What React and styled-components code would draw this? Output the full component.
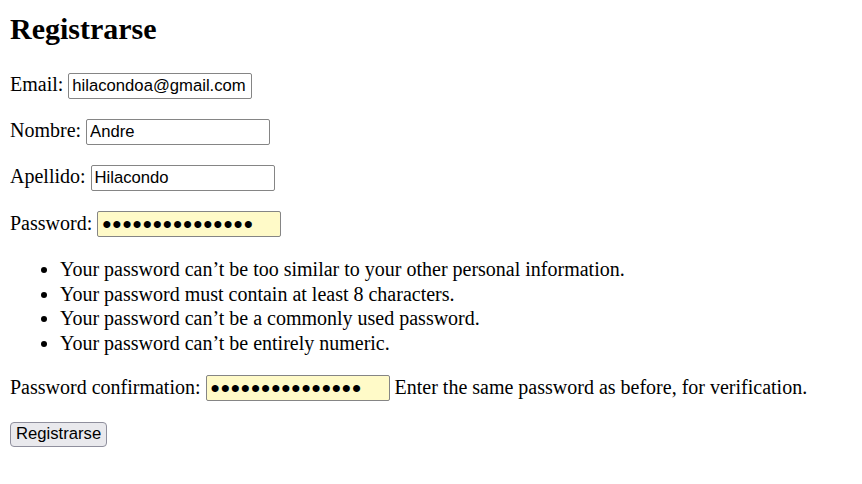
import React from "react";
import styled, { createGlobalStyle } from "styled-components";

const GlobalStyle = createGlobalStyle`
  body {
    margin: 10px;
    font-family: "Liberation Serif", "Times New Roman", serif;
    font-size: 20px;
    color: #000;
    background: #fff;
  }
`;

const Title = styled.h2`
  font-size: 30px;
  font-weight: bold;
  margin: 2px 0 27px;
`;

const Field = styled.p`
  margin: 20px 0;
`;

const TextInput = styled.input`
  box-sizing: border-box;
  width: 184px;
  height: 26px;
  padding: 1px 3px;
  font-family: "Liberation Sans", Arial, sans-serif;
  font-size: 16.67px;
  color: #000;
  background: #fff;
  border: 1px solid #858585;
  border-radius: 2px;
  outline: none;
  vertical-align: baseline;
`;

const SecretInput = styled(TextInput)`
  background: #fffac8;
  font-size: 26px;
  letter-spacing: 1px;
  line-height: 22px;
  padding: 0 4px;
  vertical-align: -3px;
`;

const HelpList = styled.ul`
  margin: 20px 0;
  padding-left: 50px;
  li {
    line-height: 24.5px;
  }
`;

const SubmitButton = styled.button`
  font-family: "Liberation Sans", Arial, sans-serif;
  font-size: 16.67px;
  color: #000;
  height: 25px;
  padding: 1px 5px;
  background: #e9e9ed;
  border: 1px solid #8f8f9d;
  border-radius: 4px;
`;

const passwordRules = [
  "Your password can’t be too similar to your other personal information.",
  "Your password must contain at least 8 characters.",
  "Your password can’t be a commonly used password.",
  "Your password can’t be entirely numeric."
];

const SECRET = "andre1234567890";

const App = () => (
  <>
    <GlobalStyle />
    <Title>Registrarse</Title>
    <form onSubmit={e => e.preventDefault()}>
      <Field>
        Email: <TextInput type="email" defaultValue="hilacondoa@gmail.com" />
      </Field>
      <Field>
        Nombre: <TextInput type="text" defaultValue="Andre" />
      </Field>
      <Field>
        Apellido: <TextInput type="text" defaultValue="Hilacondo" />
      </Field>
      <Field>
        Password: <SecretInput type="password" defaultValue={SECRET} />
      </Field>
      <HelpList>
        {passwordRules.map(rule => (
          <li key={rule}>{rule}</li>
        ))}
      </HelpList>
      <Field>
        Password confirmation: <SecretInput type="password" defaultValue={SECRET} />{" "}
        <span>Enter the same password as before, for verification.</span>
      </Field>
      <SubmitButton type="submit">Registrarse</SubmitButton>
    </form>
  </>
);

export default App;
